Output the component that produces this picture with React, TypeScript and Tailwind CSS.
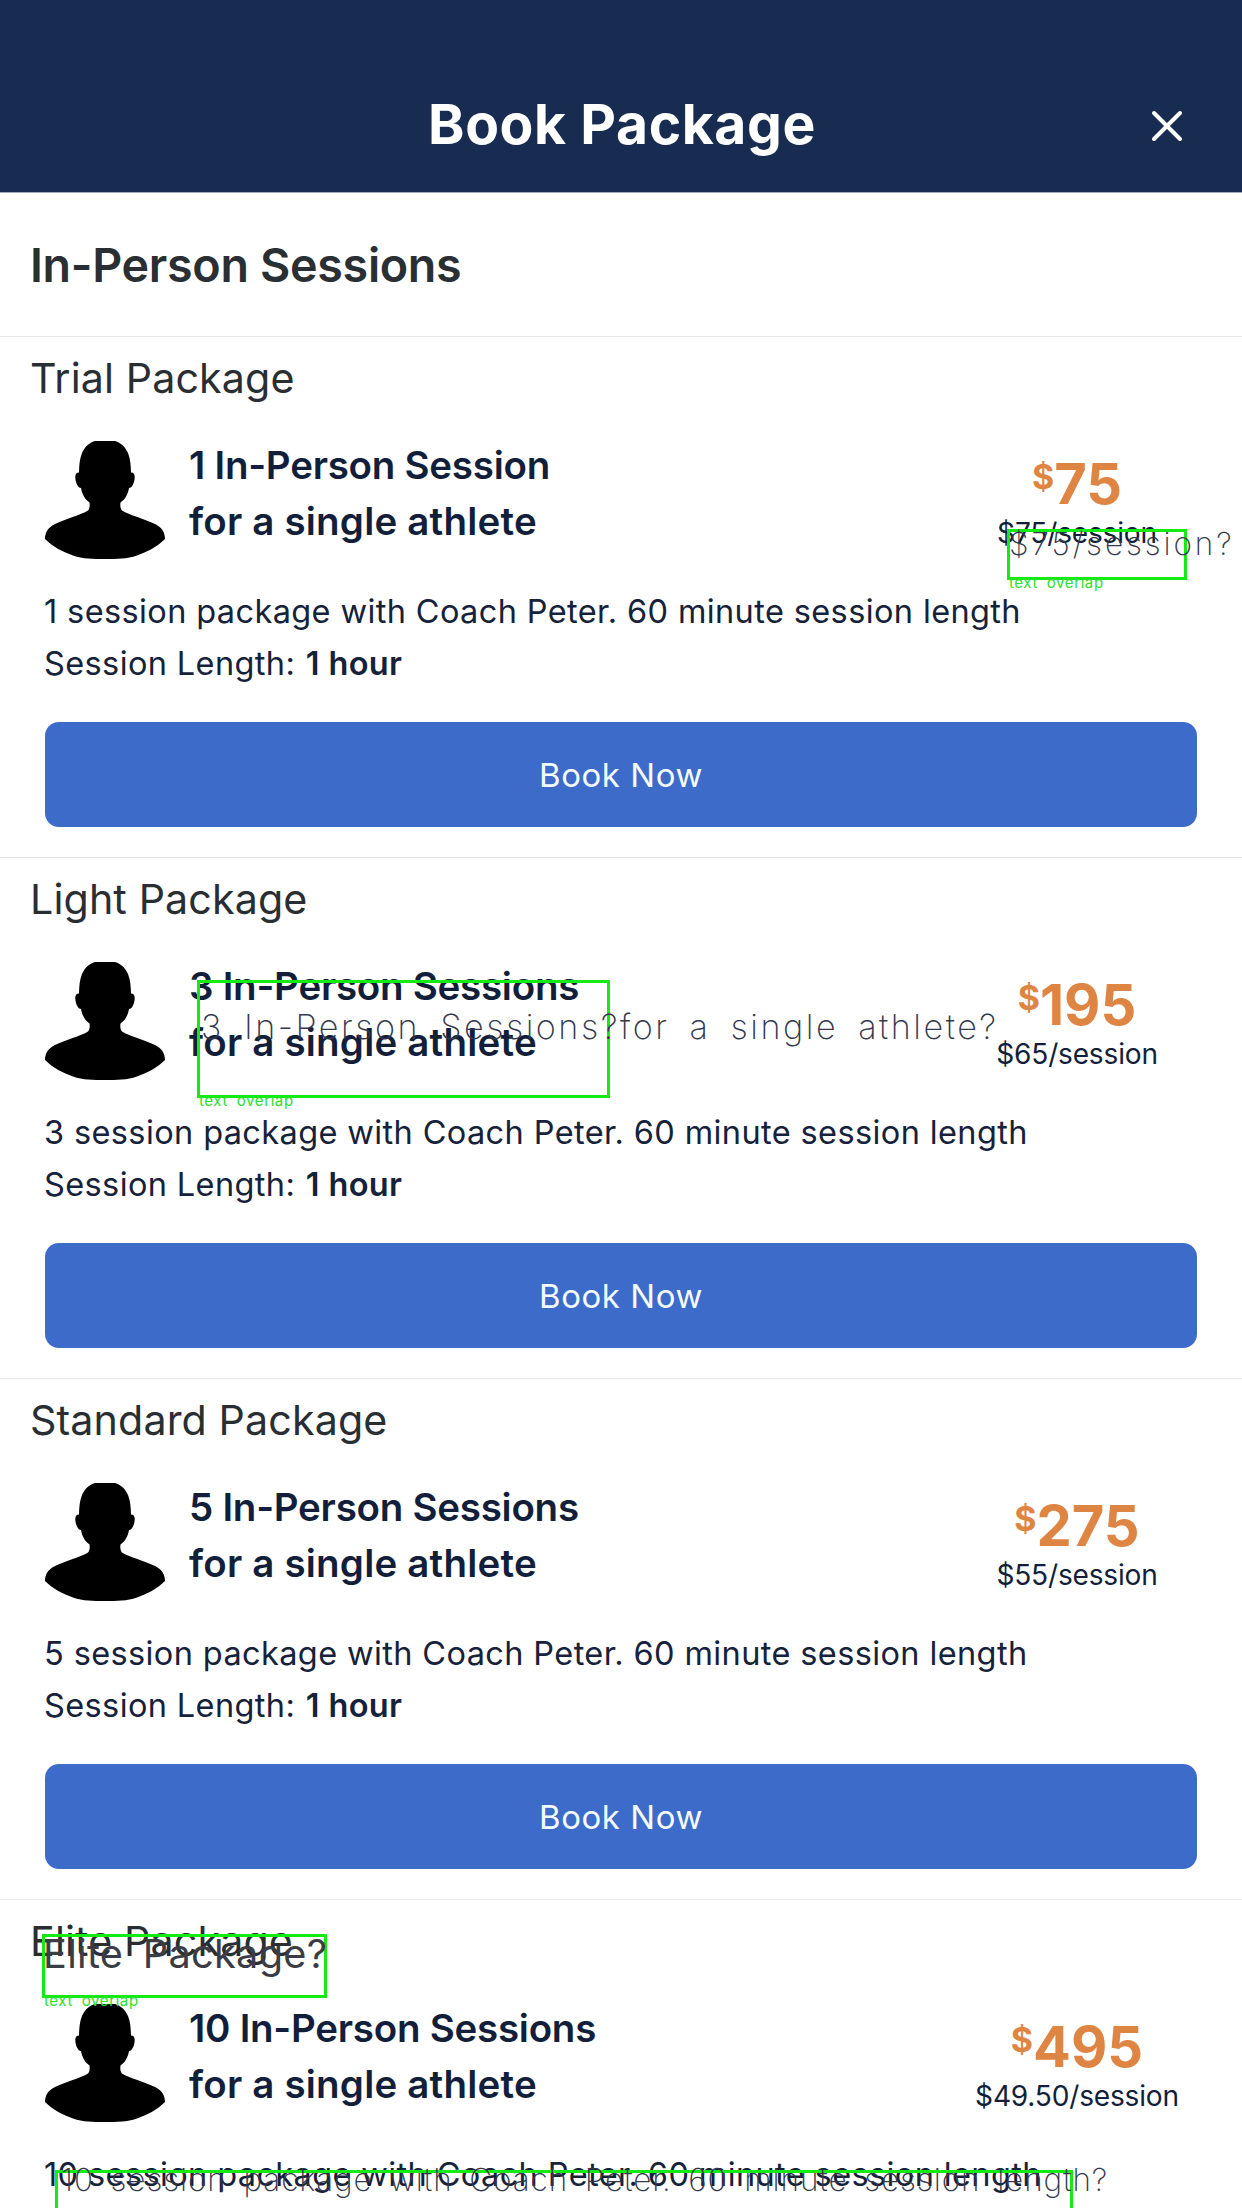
type Package = {
  name: string;
  title: string;
  amount: string;
  rate: string;
  description: string;
};

const packages: Package[] = [
  {
    name: "Trial Package",
    title: "1 In-Person Session",
    amount: "75",
    rate: "$75/session",
    description: "1 session package with Coach Peter. 60 minute session length",
  },
  {
    name: "Light Package",
    title: "3 In-Person Sessions",
    amount: "195",
    rate: "$65/session",
    description: "3 session package with Coach Peter. 60 minute session length",
  },
  {
    name: "Standard Package",
    title: "5 In-Person Sessions",
    amount: "275",
    rate: "$55/session",
    description: "5 session package with Coach Peter. 60 minute session length",
  },
  {
    name: "Elite Package",
    title: "10 In-Person Sessions",
    amount: "495",
    rate: "$49.50/session",
    description: "10 session package with Coach Peter. 60 minute session length",
  },
];

function Avatar() {
  return (
    <svg viewBox="0 0 120 118" className="mt-1 h-[118px] w-[120px] shrink-0" fill="#000">
      <path d="M50 0H70C76 2 80 5.500 83 12C85.500 18 85.800 25 86 31.500C88.500 31.500 89.900 33 89.700 36.500C89.500 40 88.800 42 87.700 44C86.800 46 85.500 47 84 47C83.500 50 82.500 53 81 55.500C79.500 58.500 77.500 60 75.500 61.500C75 65 75.500 68 77 69.500C84 74 100 78 110 83C116.500 86 120 91 120 98C112 106 102 111 92 114.500C82 118 72 118 60 118C48 118 38 118 28 114.500C18 111 8 106 0 98C0 91 3.500 86 10 83C20 78 36 74 43 69.500C44.500 68 45 65 44.500 61.500C42.500 60 40.500 58.500 39 55.500C37.500 53 36.500 50 36 47C34.500 47 33.200 46 32.300 44C31.200 42 30.500 40 30.300 36.500C30.100 33 31.500 31.500 34 31.500C34.200 25 34.500 18 37 12C40 5.500 44 2 50 0Z" />
    </svg>
  );
}

function PackageCard({ pkg }: { pkg: Package }) {
  return (
    <section className="h-[521px] shrink-0 border-t border-[#e6e7e9] px-[45px] pt-[11px]">
      <h3 className="-ml-[15px] text-[41.2px] leading-[60px] tracking-[0.12px] text-[#292e33]">{pkg.name}</h3>
      <div className="mt-[29px] flex h-[124px]">
        <Avatar />
        <div className="ml-[24px] flex-1 text-[38.5px] leading-[56px] font-[590] text-[#131f3a]">
          <p className="tracking-[-0.25px]">{pkg.title}</p>
          <p className="tracking-[0.2px]">for a single athlete</p>
        </div>
        <div className="mt-[19px] w-[240px] text-center">
          <p className="flex justify-center text-[56px] leading-[56px] font-[750] text-[#de8543]">
            <span className="text-[34px] leading-[42px]">$</span>
            <span>{pkg.amount}</span>
          </p>
          <p className="mt-[5px] text-[28.1px] leading-[33px] tracking-[-0.2px] text-[#131f3a]">{pkg.rate}</p>
        </div>
      </div>
      <div className="mt-[25px] -ml-px text-[32.5px] leading-[52px] tracking-[0.38px] whitespace-nowrap text-[#16213a]">
        <p>{pkg.description}</p>
        <p>
          Session Length: <span className="ml-[1px] font-semibold">1 hour</span>
        </p>
      </div>
      <button className="mt-[32px] flex h-[105px] w-full items-center justify-center rounded-[14px] bg-[#3d6bca] pt-[2px] text-[32.9px] tracking-[0.6px] text-[#f4fbff]">
        Book Now
      </button>
    </section>
  );
}

export default function App() {
  return (
    <main className="relative flex h-[2208px] w-[1242px] flex-col overflow-hidden bg-white font-['Inter',sans-serif]">
      <header className="grid h-[193px] shrink-0 grid-cols-[1fr_auto_1fr] border-b border-[#a3a8b6] bg-[#182b50] pt-[92px]">
        <div />
        <h1 className="ml-[2px] text-[55.2px] leading-[64px] font-[680] tracking-[0.6px] text-white">Book Package</h1>
        <button aria-label="Close" className="mt-[18px] mr-[59px] h-8 w-8 justify-self-end">
          <svg viewBox="0 0 32 32" className="h-8 w-8" stroke="#fff" strokeWidth="4" strokeLinecap="round">
            <path d="M3 3L29 29M29 3L3 29" />
          </svg>
        </button>
      </header>
      <h2 className="h-[143px] shrink-0 pt-[44px] pl-[30px] text-[46.6px] leading-[56px] font-[590] tracking-[-0.3px] text-[#2a2f34]">
        In-Person Sessions
      </h2>
      {packages.map((pkg) => (
        <PackageCard key={pkg.name} pkg={pkg} />
      ))}

      {/* Text overlap annotations drawn above the cards */}
      <div className="pointer-events-none whitespace-nowrap">
        <div className="absolute top-[529px] left-[1007px] h-[51px] w-[180px] border-3 border-[#14eb14]" />
        <p className="absolute top-[528px] left-[1009px] text-[31.5px] leading-[32px] font-extralight tracking-[2.9px] text-[#33384d]">$75/session?</p>
        <p className="absolute top-[574px] left-[1009px] text-[15px] leading-[18px] tracking-[0.6px] [word-spacing:4px] text-[#2be02b]">text overlap</p>

        <div className="absolute top-[980px] left-[197px] h-[118px] w-[413px] border-3 border-[#14eb14]" />
        <p className="absolute top-[1011px] left-[201px] text-[34.2px] leading-[32px] font-extralight tracking-[2.5px] [word-spacing:8px] text-[#33384d]">3 In-Person Sessions?for a single athlete?</p>
        <p className="absolute top-[1092px] left-[199px] text-[15px] leading-[18px] tracking-[0.6px] [word-spacing:4px] text-[#2be02b]">text overlap</p>

        <div className="absolute top-[1934px] left-[42px] h-[64px] w-[285px] border-3 border-[#14eb14]" />
        <p className="absolute top-[1936px] left-[43px] text-[39.7px] leading-[36px] tracking-[0.3px] [word-spacing:8px] text-[#3b3c44]">Elite Package?</p>
        <p className="absolute top-[1992px] left-[44px] text-[15px] leading-[18px] tracking-[0.6px] [word-spacing:4px] text-[#2be02b]">text overlap</p>

        <div className="absolute top-[2170px] left-[55px] h-[41px] w-[1018px] border-3 border-[#14eb14]" />
        <p className="absolute top-[2164px] left-[61px] text-[31.5px] leading-[32px] font-extralight tracking-[0.9px] [word-spacing:7px] text-[#33384d]">10 session package with Coach Peter. 60 minute session length?</p>
      </div>
    </main>
  );
}
